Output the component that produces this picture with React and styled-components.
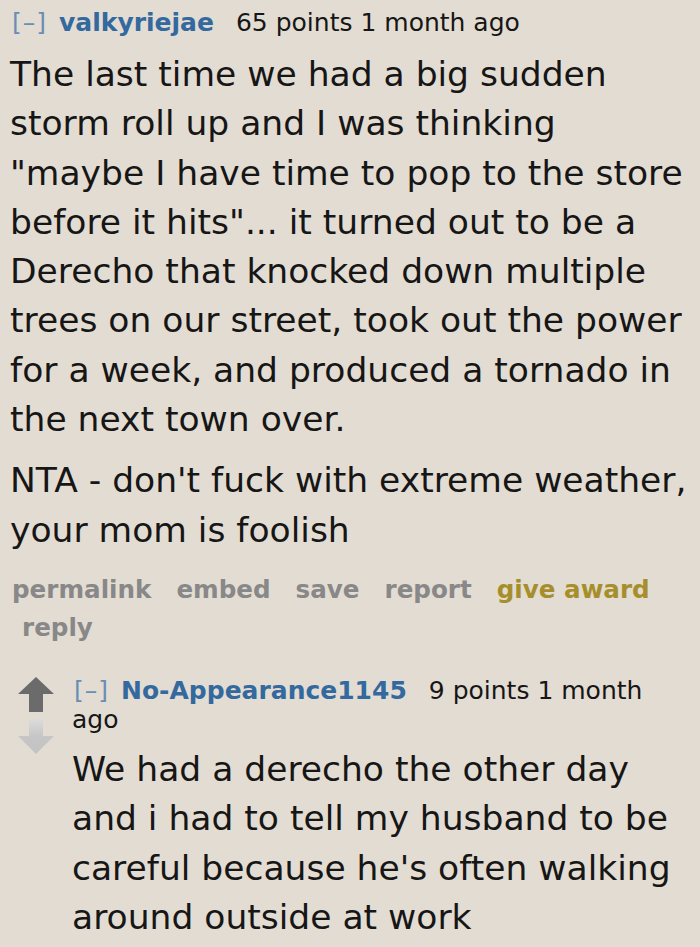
import React from 'react';
import styled, { createGlobalStyle } from 'styled-components';

const GlobalStyle = createGlobalStyle`
    html, body {
        margin: 0;
        padding: 0;
        background: #e3dcd2;
    }
    body {
        font-family: "DejaVu Sans", Verdana, sans-serif;
        color: #161616;
    }
`

const Page = styled.div`
    padding: 8px 4px 0 10px;
`

const Comment = styled.div`
    display: flex;
    align-items: flex-start;
    margin-top: ${props => props.nested ? '29px' : '0'};
`

const VoteColumn = styled.div`
    width: 62px;
    flex-shrink: 0;
    display: flex;
    flex-direction: column;
    gap: 6px;
    padding: 1px 0 0 7px;
    box-sizing: border-box;
`

const Entry = styled.div`
    flex: 1;
    min-width: 0;
`

const Tagline = styled.p`
    margin: 0;
    font-size: 25px;
    line-height: ${props => props.tight ? '29px' : '30px'};
`

const Expand = styled.span`
    color: #6a8db5;
    margin: 0 12px 0 2px;
    letter-spacing: 1px;
`

const Author = styled.span`
    color: #33699e;
    font-weight: bold;
    margin-right: 22px;
`

const Score = styled.span`
    color: #161616;
`

const Body = styled.div`
    margin-top: ${props => props.nested ? '11px' : '12px'};
    font-size: 34.5px;
    line-height: 49.3px;

    & > p {
        margin: 0 0 12px 0;
    }
    & > p:last-child {
        margin-bottom: 0;
    }
`

const Buttons = styled.div`
    margin-top: 16px;
    padding-left: 12px;
    text-indent: -10px;
    font-size: 24.6px;
    line-height: 38px;
    font-weight: bold;
`

const ButtonLink = styled.span`
    display: inline-block;
    text-indent: 0;
    margin-right: 25px;
    color: ${props => props.gold ? '#a68f2b' : '#888888'};
`

function UpArrow() {
    return (
        <svg width="38" height="36" viewBox="0 0 38 36">
            <path d="M19 0 L37 17 L26 17 L26 35 L12 35 L12 17 L1 17 Z" fill="#6b6b6b" />
        </svg>
    )
}

function DownArrow() {
    return (
        <svg width="38" height="36" viewBox="0 0 38 36">
            <defs>
                <linearGradient id="dn" x1="0" y1="0" x2="0" y2="1">
                    <stop offset="0" stopColor="#dcdcdc" />
                    <stop offset="0.5" stopColor="#c6c6c6" />
                    <stop offset="1" stopColor="#c3c3c3" />
                </linearGradient>
            </defs>
            <path d="M12 0 L26 0 L26 17 L37 17 L19 35 L1 17 L12 17 Z" fill="url(#dn)" />
        </svg>
    )
}

export default function App() {
    return (
        <Page>
            <GlobalStyle />
            <Comment>
                <Entry>
                    <Tagline>
                        <Expand>[–]</Expand>
                        <Author>valkyriejae</Author>
                        <Score>65 points 1 month ago</Score>
                    </Tagline>
                    <Body>
                        <p>The last time we had a big sudden storm roll up and I was thinking "maybe I have time to pop to the store before it hits"... it turned out to be a Derecho that knocked down multiple trees on our street, took out the power for a week, and produced a tornado in the next town over.</p>
                        <p>NTA - don't fuck with extreme weather, your mom is foolish</p>
                    </Body>
                    <Buttons>
                        <ButtonLink>permalink</ButtonLink>
                        <ButtonLink>embed</ButtonLink>
                        <ButtonLink>save</ButtonLink>
                        <ButtonLink>report</ButtonLink>
                        <ButtonLink gold>give award</ButtonLink>
                        <ButtonLink>reply</ButtonLink>
                    </Buttons>
                </Entry>
            </Comment>
            <Comment nested>
                <VoteColumn>
                    <UpArrow />
                    <DownArrow />
                </VoteColumn>
                <Entry>
                    <Tagline tight>
                        <Expand>[–]</Expand>
                        <Author>No-Appearance1145</Author>
                        <Score>9 points 1 month ago</Score>
                    </Tagline>
                    <Body nested>
                        <p>We had a derecho the other day and i had to tell my husband to be careful because he's often walking around outside at work</p>
                    </Body>
                </Entry>
            </Comment>
        </Page>
    )
}
